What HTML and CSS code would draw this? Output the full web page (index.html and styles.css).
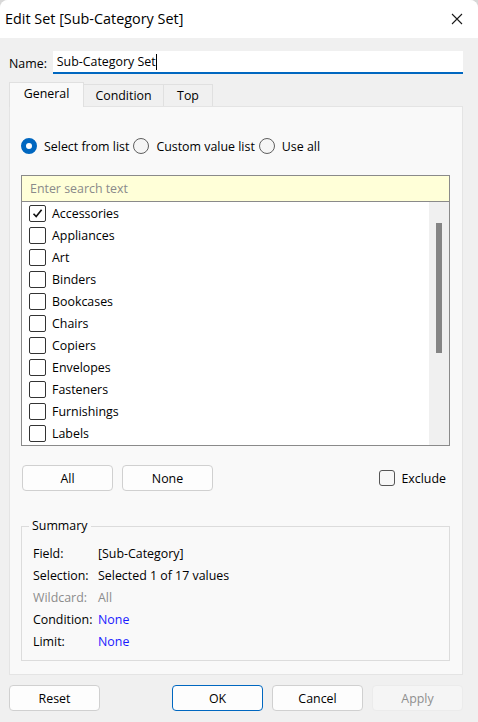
FILE: index.html
```html
<!DOCTYPE html>
<html>
<head>
<meta charset="utf-8">
<link rel="stylesheet" href="styles.css">
</head>
<body>
<div class="window">
  <div class="titlebar">
    <span class="title">Edit Set [Sub-Category Set]</span>
    <svg class="close" width="12" height="12" viewBox="0 0 12 12"><path d="M1 1L11 11M11 1L1 11" stroke="#1a1a1a" stroke-width="1.1" fill="none"/></svg>
  </div>
  <div class="content">
    <div class="namerow">
      <span class="namelabel">Name:</span>
      <div class="nameinput"><span>Sub-Category Set</span><span class="caret"></span></div>
    </div>
    <div class="tabs">
      <div class="tab active">General</div>
      <div class="tab t-cond">Condition</div>
      <div class="tab t-top">Top</div>
    </div>
    <div class="panel">
      <div class="radios">
        <span class="radio on"></span><span class="rlabel">Select from list</span>
        <span class="radio"></span><span class="rlabel">Custom value list</span>
        <span class="radio"></span><span class="rlabel">Use all</span>
      </div>
      <div class="listbox">
        <div class="search">Enter search text</div>
        <div class="listbody">
          <div class="items">
            <div class="item"><span class="cb checked"><svg width="13" height="13" viewBox="0 0 13 13"><path d="M2.5 6.8L5.2 9.6L10.6 2.8" stroke="#111" stroke-width="1.6" fill="none"/></svg></span>Accessories</div>
            <div class="item"><span class="cb"></span>Appliances</div>
            <div class="item"><span class="cb"></span>Art</div>
            <div class="item"><span class="cb"></span>Binders</div>
            <div class="item"><span class="cb"></span>Bookcases</div>
            <div class="item"><span class="cb"></span>Chairs</div>
            <div class="item"><span class="cb"></span>Copiers</div>
            <div class="item"><span class="cb"></span>Envelopes</div>
            <div class="item"><span class="cb"></span>Fasteners</div>
            <div class="item"><span class="cb"></span>Furnishings</div>
            <div class="item"><span class="cb"></span>Labels</div>
          </div>
          <div class="scrollbar"><div class="thumb"></div></div>
        </div>
      </div>
      <div class="btnrow">
        <div class="btn">All</div>
        <div class="btn">None</div>
        <div class="spacer"></div>
        <span class="excb"></span><span class="exlabel">Exclude</span>
      </div>
      <div class="summary">
        <div class="legend">Summary</div>
        <div class="srow"><span class="sk">Field:</span><span>[Sub-Category]</span></div>
        <div class="srow"><span class="sk">Selection:</span><span>Selected 1 of 17 values</span></div>
        <div class="srow dim"><span class="sk">Wildcard:</span><span>All</span></div>
        <div class="srow"><span class="sk">Condition:</span><span class="link">None</span></div>
        <div class="srow"><span class="sk">Limit:</span><span class="link">None</span></div>
      </div>
    </div>
    <div class="footer">
      <div class="btn fbtn">Reset</div>
      <div class="spacer"></div>
      <div class="btn fbtn ok">OK</div>
      <div class="btn fbtn">Cancel</div>
      <div class="btn fbtn disabled">Apply</div>
    </div>
  </div>
</div>
</body>
</html>
```
FILE: styles.css
```css
html, body {
  margin: 0;
  padding: 0;
  background: #d8d8d8;
}
body {
  font-family: "Open Sans", "Noto Sans", sans-serif;
  font-size: 12.4px;
  color: #000;
}
.window {
  width: 478px;
  height: 722px;
  background: #f0f0f0;
  border-radius: 8px 8px 0 0;
  overflow: hidden;
  display: flex;
  flex-direction: column;
}
.titlebar {
  height: 38px;
  background: #fff;
  display: flex;
  align-items: center;
  padding-left: 5px;
  flex: none;
}
.title {
  font-size: 14.4px;
  flex: 1;
  margin-top: -1px;
}
.close {
  margin-right: 15px;
}
.content {
  padding: 14px 15px 0 9px;
  display: flex;
  flex-direction: column;
}
.namerow {
  display: flex;
  align-items: center;
  height: 22px;
}
.namelabel {
  width: 44px;
}
.nameinput {
  width: 405px;
  height: 21px;
  background: #fff;
  border-bottom: 2px solid #0067c0;
  box-sizing: content-box;
  display: flex;
  align-items: center;
  padding-left: 4px;
  padding-right: 3px;
  margin-top: -1px;
}
.caret {
  width: 1px;
  height: 16px;
  background: #000;
}
.tabs {
  display: flex;
  align-items: flex-end;
  margin-top: 8px;
  height: 24px;
  position: relative;
  z-index: 1;
}
.tab {
  box-sizing: border-box;
  height: 22px;
  border: 1px solid #e0e0e0;
  border-bottom: none;
  background: #f0f0f0;
  display: flex;
  align-items: center;
  justify-content: center;
}
.tab.active {
  width: 75px;
  background: #f9f9f9;
  padding-bottom: 3px;
  margin-bottom: -1px;
  height: 25px;
}
.t-cond {
  width: 81px;
  margin-left: -1px;
}
.t-top {
  width: 50px;
  margin-left: -1px;
}
.panel {
  box-sizing: border-box;
  width: 454px;
  height: 569px;
  background: #f9f9f9;
  border: 1px solid #e4e4e4;
  padding: 30px 12px 0 11px;
  display: flex;
  flex-direction: column;
}
.radios {
  display: flex;
  align-items: center;
  height: 18px;
}
.radio {
  box-sizing: border-box;
  width: 16px;
  height: 16px;
  border-radius: 50%;
  border: 1px solid #5f5f5f;
  background: #f5f5f5;
  flex: none;
}
.radio.on {
  border: 5px solid #0067c0;
  background: #fff;
}
.rlabel {
  margin-left: 7px;
  margin-right: 4px;
}
.listbox {
  margin-top: 20px;
  box-sizing: border-box;
  width: 429px;
  height: 271px;
  border: 1px solid #8a8a8a;
  background: #fff;
  display: flex;
  flex-direction: column;
}
.search {
  height: 25px;
  background: #ffffd8;
  border-bottom: 1px solid #8a8a8a;
  color: #8a8a8a;
  padding-left: 8px;
  display: flex;
  align-items: center;
  flex: none;
}
.listbody {
  flex: 1;
  display: flex;
}
.items {
  flex: 1;
}
.item {
  height: 22px;
  display: flex;
  align-items: center;
  padding-left: 7px;
}
.cb {
  box-sizing: border-box;
  width: 17px;
  height: 17px;
  border: 1.5px solid #333;
  border-radius: 2px;
  margin-right: 6px;
  display: flex;
  align-items: center;
  justify-content: center;
  flex: none;
}
.scrollbar {
  width: 20px;
  background: #f0f0f0;
  display: flex;
  justify-content: center;
  padding-top: 21px;
  box-sizing: border-box;
}
.thumb {
  width: 6px;
  height: 130px;
  background: #858585;
}
.btnrow {
  display: flex;
  align-items: center;
  margin-top: 19px;
  width: 429px;
  height: 26px;
}
.btn {
  box-sizing: border-box;
  width: 91px;
  height: 26px;
  border: 1px solid #d0d0d0;
  border-radius: 4px;
  background: #fdfdfd;
  display: flex;
  align-items: center;
  justify-content: center;
  margin-right: 9px;
}
.btnrow .btn:first-child {
  margin-left: 1px;
}
.spacer {
  flex: 1;
}
.excb {
  box-sizing: border-box;
  width: 16px;
  height: 16px;
  border: 1px solid #555;
  border-radius: 3px;
  background: #f7f7f7;
  margin-right: 6px;
}
.exlabel {
  margin-right: 4px;
}
.summary {
  margin-top: 35px;
  box-sizing: border-box;
  width: 429px;
  height: 135px;
  border: 1px solid #dcdcdc;
  padding: 15px 0 0 11px;
  position: relative;
}
.legend {
  position: absolute;
  top: -10px;
  left: 7px;
  padding: 0 3px;
  background: #f9f9f9;
  line-height: 18px;
}
.srow {
  height: 22px;
  display: flex;
  align-items: center;
}
.sk {
  width: 65px;
}
.dim {
  color: #8c8c8c;
}
.link {
  color: #1a1aff;
}
.footer {
  display: flex;
  margin-top: 10px;
  width: 454px;
}
.fbtn {
  height: 26px;
  width: 91px;
}
.footer .fbtn:last-child {
  margin-right: 0;
}
.fbtn.ok {
  border-color: #0067c0;
}
.fbtn.disabled {
  background: #f5f5f5;
  border-color: #ebebeb;
  color: #8f8f8f;
}
```
